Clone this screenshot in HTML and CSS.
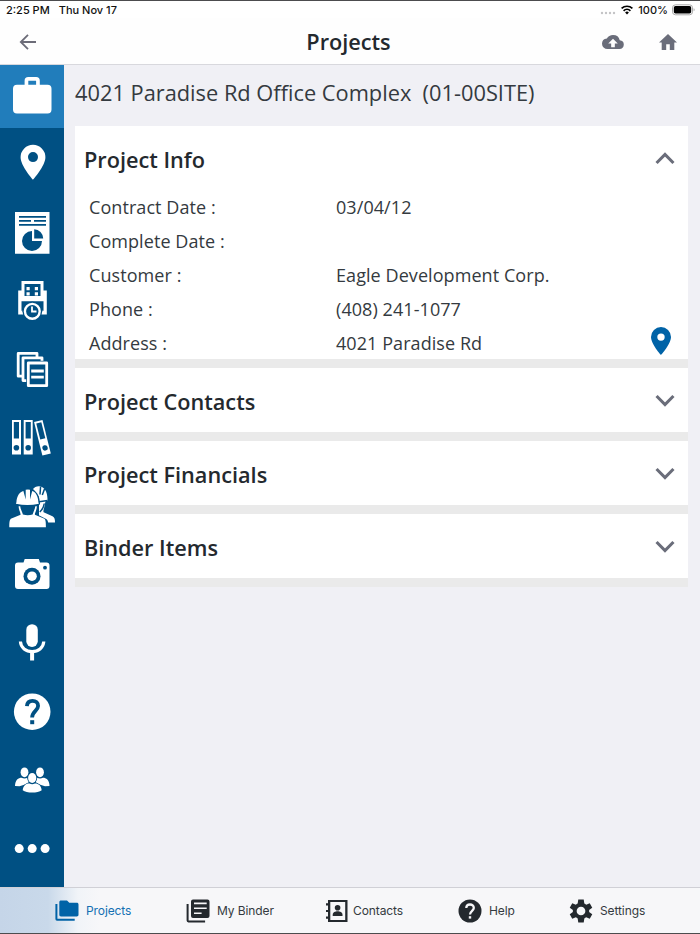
FILE: index.html
```html
<!DOCTYPE html>
<html lang="en">
<head>
    <meta charset="UTF-8">
    <meta name="viewport" content="width=device-width, initial-scale=1.0">
    <title>Projects</title>
    <link rel="stylesheet" href="styles.css">
</head>
<body>
    <div class="app">
        <div class="statusbar">
            <span class="time">2:25 PM</span>
            <span class="date">Thu Nov 17</span>
            <svg class="signal" width="16" height="12" viewBox="0 0 16 12" fill="#c4c4c6"><circle cx="2" cy="9" r="1.2"/><circle cx="6" cy="9" r="1.2"/><circle cx="10" cy="9" r="1.2"/><circle cx="14" cy="9" r="1.2"/></svg>
            <svg class="wifi" width="12" height="10" viewBox="0 0 12 10" fill="none" stroke="#000" stroke-width="1.7"><path d="M.6 3.4a7.8 7.8 0 0 1 10.8 0M2.6 5.8a5 5 0 0 1 6.8 0"/><path d="M6 9.5 4.1 7.5a2.8 2.8 0 0 1 3.8 0z" fill="#000" stroke="none"/></svg>
            <span class="percent">100%</span>
            <svg class="battery" width="23" height="12" viewBox="0 0 23 12"><rect x=".5" y=".8" width="20" height="10" rx="3" fill="#fff" stroke="#aaa"/><rect x="1.8" y="2.1" width="17.4" height="7.4" rx="1.7"/><path d="M21.6 4.2v3q1-.3 1-1.5t-1-1.5" fill="#aaa"/></svg>
        </div>

        <header class="header">
            <svg class="back" width="18" height="16" viewBox="0 0 18 16" fill="none" stroke="#6c6c78" stroke-width="1.8"><path d="M17 8H1.8M9 .8 1.8 8 9 15.2"/></svg>
            <h1>Projects</h1>
            <div class="actions">
                <svg width="22" height="14" viewBox="0 4 24 16" preserveAspectRatio="none" fill="#6a6d7a"><path d="M19.35 10.04A7.49 7.49 0 0 0 12 4C9.11 4 6.6 5.64 5.35 8.04A6 6 0 0 0 0 14a6 6 0 0 0 6 6h13a5 5 0 0 0 .35-9.96zM14 13.6V18h-4v-4.4H6.8L12 8.2l5.2 5.4z" fill-rule="evenodd"/></svg>
                <svg width="18" height="16" viewBox="2 3 20 17" preserveAspectRatio="none" fill="#6a6d7a"><path d="M10 20v-6h4v6h5v-8h3L12 3 2 12h3v8z"/></svg>
            </div>
        </header>

        <div class="main">
            <nav class="sidebar">
                <a class="side-item active">
                    <svg viewBox="0 0 64 63"><path fill-rule="evenodd" d="M16 19.7h8.6v-4a3.7 3.7 0 0 1 3.7-3.7h7.8a3.7 3.7 0 0 1 3.7 3.7v4h7.7a4 4 0 0 1 4 4v20.8a4 4 0 0 1-4 4H17a4 4 0 0 1-4-4V23.7a4 4 0 0 1 4-4zm12.3 0h7.8v-3.9h-7.8z"/></svg>
                </a>
                <a class="side-item">
                    <svg viewBox="0 0 64 63"><path fill-rule="evenodd" d="M33 11.8a12.4 12.4 0 0 0-12.4 12.4C20.6 33 33 46.7 33 46.7S45.4 33 45.4 24.2A12.4 12.4 0 0 0 33 11.8zm0 7.3a5 5 0 1 1 0 10 5 5 0 0 1 0-10z"/></svg>
                </a>
                <a class="side-item">
                    <svg viewBox="0 0 64 63"><path d="M15 10h34.5v41.8H15z"/><g class="cut"><path d="M19 14h27v1.7H19zM19 18h12v1.7H19zM34 18h12v1.7H34zM19 22h27v1.8H19z"/><path d="M32 29v10h10a10 10 0 1 1-10-10z"/><path d="M34.2 27.2a9.5 9.5 0 0 1 9 9.2h-9z"/></g></svg>
                </a>
                <a class="side-item">
                    <svg viewBox="0 0 64 63"><path d="M21.5 11h22v9.5h3.3v24H18.2v-24h3.3z"/><path class="cut" d="M24.5 14h16v12h-16zM21.5 31.2h22v9.5h-22z"/><path d="M26.5 17h3.2v3.2h-3.2zM34.8 17H38v3.2h-3.2zM26.5 22.3h3.2v3.2h-3.2zM34.8 22.3H38v3.2h-3.2z"/><circle cx="32.3" cy="41.3" r="9.9" class="cut"/><circle cx="32.3" cy="41.3" r="7.4" class="line"/><path class="line thin" d="M32 36.5v5h4.5"/></svg>
                </a>
                <a class="side-item">
                    <svg viewBox="0 0 64 63"><g class="paper"><path d="M18.2 14.4H37v22.8H18.2z"/><path d="M23 18.8h19v22.8H23z"/><path class="gap" d="M26.2 21.8h23v28h-23z"/><path d="M28.3 24h18.4v22.7H28.3z"/><path d="M31.2 32h12.6M31.2 38.2h12.6"/></g></svg>
                </a>
                <a class="side-item">
                    <svg viewBox="0 0 64 63"><path d="M12 13h9v34.5h-9z"/><path class="cut" d="M13.8 15H19v16.5h-5.2z"/><circle class="cut" cx="16.4" cy="40.8" r="2.8"/><path d="M23.7 13h9v34.5h-9z"/><path class="cut" d="M25.6 15h5.2v16.5h-5.2z"/><circle class="cut" cx="28.2" cy="40.8" r="2.8"/><g transform="rotate(-14 42.3 30.4)"><path d="M38 13.5h8.7V48H38z"/><path class="cut" d="M39.8 15.5H45V32h-5.2z"/><circle class="cut" cx="42.4" cy="41.3" r="2.7"/></g></svg>
                </a>
                <a class="side-item">
                    <svg viewBox="0 0 64 63"><path d="M33 13c1.2-1.8 3.5-2.9 6-2.8 5.2.3 9 5.5 8.4 14.5l-2 .6c-.8 7-2.6 9-1.8 10.9l8.9 4.1c2 .9 2.5 3 2.5 6.2H39V21z"/><path class="cut-line" d="m40.6 10.5-.6 8M44.6 12.8 42.3 19M37.5 26l10-1.6M44.3 27.5c-.8 5-2.3 6.5-4.5 8.5"/><path class="cut" d="M14.8 25.2C15 16.4 21.3 11.8 27 12c7 0 12 5.3 12.8 13.2l.3 3-2 1.3c-.2 5-1.8 7-2.2 8.2l10.3 5.3c1.8 1 2.3 4 2.3 8.2H8V51c0-5.8 1-7.5 3-8.4l8-3.8-2-9.3-3-1.5z"/><path d="M16.4 26.2c.3-6.3 3.3-10.2 7-11.2l2.3 8.6V13.8q2.3-.6 4.3 0v9.8l2.2-8.6c3.5 1 5.8 5 6.2 11.2l.5 1.5q-11.3 2.5-23 0z"/><path d="M18.6 30.2h1.6c.3 3 2.2 6 2.7 8.3q4.9 1.5 9.7 0c.6-2 2.3-5.3 2.7-8.3h1.6c-.5 5.3-2 6-2 8.6l9 3.7c1.7.8 2 2.8 2 8.7H9.3c0-5.8.4-7.9 2.1-8.7l9.2-3.7c-.2-3-1.8-4.3-2-8.6z"/></svg>
                </a>
                <a class="side-item">
                    <svg viewBox="0 0 64 63"><path d="M18 18.4h5.5l1.2-3.3h14.1l1.2 3.3h6.5a3 3 0 0 1 3 3V42a3 3 0 0 1-3 3H18a3 3 0 0 1-3-3V21.4a3 3 0 0 1 3-3z"/><circle class="cut" cx="32" cy="32.2" r="8.5"/><circle cx="32" cy="32.2" r="4.8"/><circle class="cut" cx="45" cy="23.7" r="1.9"/></svg>
                </a>
                <a class="side-item">
                    <svg viewBox="0 0 64 63"><rect x="26.3" y="12.2" width="11.5" height="22.8" rx="5.7"/><path class="line thick" d="M20.4 29.5c.4 6.3 5.6 10.1 11.7 10.1s11.3-3.8 11.7-10.1"/><path d="M30.1 40h4v8.6h-4z"/></svg>
                </a>
                <a class="side-item">
                    <svg viewBox="0 0 64 63"><circle cx="32.2" cy="30.7" r="18.3"/><path class="cut-line bold" d="M26.9 25.2c.2-3.5 2.3-5.4 5.6-5.4 3.4 0 5.6 2 5.6 5.2 0 4.6-6 5.3-6 11.4"/><path class="cut" d="M30.2 39.2h4v4h-4z"/></svg>
                </a>
                <a class="side-item">
                    <svg viewBox="0 0 64 63"><ellipse cx="24.5" cy="23.3" rx="3.9" ry="4.9"/><ellipse cx="40" cy="23.3" rx="3.9" ry="4.9"/><path d="M15 37c0-6 3.5-8.2 6.5-8.2q3 1.2 6 0L29 33l-4 2.5-5.5 1.7zM49.5 37c0-6-3.5-8.2-6.5-8.2q-3 1.2-6 0L35.5 33l4 2.5 5.5 1.7z"/><ellipse class="cut" cx="32.2" cy="28.8" rx="5" ry="5.9"/><path class="cut" d="M21.7 42c.4-6 4.4-8.2 8.3-8h4.4c3.9-.2 7.9 2 8.3 8z"/><ellipse cx="32.2" cy="29" rx="4.1" ry="5"/><path d="M22.7 41.2c.6-5 3.9-6.8 6.8-6.6q2.7 1.2 5.4 0c3.2-.2 6.3 1.8 6.8 6.6-4 3.2-15 3.2-19 0z"/></svg>
                </a>
                <a class="side-item">
                    <svg viewBox="0 0 64 63"><circle cx="19.2" cy="30.6" r="4.5"/><circle cx="32.2" cy="30.6" r="4.5"/><circle cx="45.1" cy="30.6" r="4.5"/></svg>
                </a>
            </nav>

            <section class="content">
                <h2 class="project-name">4021 Paradise Rd Office Complex&nbsp; (01-00SITE)</h2>

                <div class="card info">
                    <div class="card-header">
                        <h3>Project Info</h3>
                        <svg class="chevron" viewBox="0 0 18 12"><path d="m1.2 10.2 7.8-8 7.8 8"/></svg>
                    </div>
                    <div class="row"><span class="label">Contract Date :</span><span class="value">03/04/12</span></div>
                    <div class="row"><span class="label">Complete Date :</span><span class="value"></span></div>
                    <div class="row"><span class="label">Customer :</span><span class="value">Eagle Development Corp.</span></div>
                    <div class="row"><span class="label">Phone :</span><span class="value">(408) 241-1077</span></div>
                    <div class="row">
                        <span class="label">Address :</span><span class="value">4021 Paradise Rd</span>
                        <svg class="pin" width="20" height="28" viewBox="0 0 20 28"><path fill="#0063a7" fill-rule="evenodd" d="M10 0A10 10 0 0 0 0 10c0 7 10 18 10 18s10-11 10-18A10 10 0 0 0 10 0zm0 6.4a3.7 3.7 0 1 1 0 7.4 3.7 3.7 0 0 1 0-7.4z"/></svg>
                    </div>
                </div>
                <div class="card">
                    <div class="card-header">
                        <h3>Project Contacts</h3>
                        <svg class="chevron" viewBox="0 0 18 12"><path d="m1.2 1.8 7.8 8 7.8-8"/></svg>
                    </div>
                </div>
                <div class="card">
                    <div class="card-header">
                        <h3>Project Financials</h3>
                        <svg class="chevron" viewBox="0 0 18 12"><path d="m1.2 1.8 7.8 8 7.8-8"/></svg>
                    </div>
                </div>
                <div class="card">
                    <div class="card-header">
                        <h3>Binder Items</h3>
                        <svg class="chevron" viewBox="0 0 18 12"><path d="m1.2 1.8 7.8 8 7.8-8"/></svg>
                    </div>
                </div>
            </section>
        </div>

        <footer class="tabbar">
            <a class="tab tab-projects selected">
                <svg width="24" height="24" viewBox="0 0 24 24"><path d="M6 1.5h6l2.3 2.3h7.5c1 0 1.7.7 1.7 1.6v10.4c0 1-.7 1.7-1.7 1.7H6c-1 0-1.7-.7-1.7-1.7V3.2c0-1 .7-1.7 1.7-1.7z"/><path d="M.4 5h2v14.7h17.3v2H2q-1.6 0-1.6-1.6z"/></svg>
                <span>Projects</span>
            </a>
            <a class="tab tab-binder">
                <svg width="24" height="24" viewBox="0 0 24 24"><path fill-rule="evenodd" d="M7 .6h14.5a2 2 0 0 1 2 2V17a2 2 0 0 1-2 2H7a2 2 0 0 1-2-2V2.6a2 2 0 0 1 2-2zM8 5.2h12.7V3.6H8zm0 4.9h12.7V8.5H8zm0 5h7.6v-1.6H8z"/><path d="M.6 5h2v16.4h16.5v2H2.4q-1.8 0-1.8-1.8z"/></svg>
                <span>My Binder</span>
            </a>
            <a class="tab tab-contacts">
                <svg width="24" height="24" viewBox="0 0 24 24"><path fill-rule="evenodd" d="M3 1h19.5v22H3v-3.2H1v-2.2h2v-4.5H1v-2.2h2V6.4H1V4.2h2zm2.3 2.1v17.8h14.9V3.1z"/><circle cx="12.6" cy="8.8" r="2.8"/><path d="M7.7 17v-1.3c0-2.3 2.6-3.4 4.9-3.4s4.9 1.1 4.9 3.4V17z"/></svg>
                <span>Contacts</span>
            </a>
            <a class="tab tab-help">
                <svg width="24" height="24" viewBox="0 0 24 24"><circle cx="12" cy="12" r="11.5"/><path fill="none" stroke="#f7f7f9" stroke-width="2.3" d="M8.3 9.1c0-2.2 1.6-3.6 3.7-3.6s3.8 1.4 3.8 3.5c0 2.7-3.8 3-3.8 6.6"/><path fill="#f7f7f9" d="M10.8 17.2h2.4v2.4h-2.4z"/></svg>
                <span>Help</span>
            </a>
            <a class="tab tab-settings">
                <svg width="24" height="24" viewBox="1 1 22 22"><path d="M19.43 12.98c.04-.32.07-.64.07-.98s-.03-.66-.07-.98l2.9-2.1-2.3-4.1-3.3 1.35a7.5 7.5 0 0 0-1.69-.98L14.5 1.5h-5l-.54 3.69c-.61.25-1.17.59-1.69.98L3.97 4.82l-2.3 4.1 2.9 2.1a8 8 0 0 0 0 1.96l-2.9 2.1 2.3 4.1 3.3-1.35c.52.4 1.08.73 1.69.98l.54 3.69h5l.54-3.69a7.5 7.5 0 0 0 1.69-.98l3.3 1.35 2.3-4.1zM12 16a4 4 0 1 1 0-8 4 4 0 0 1 0 8z"/></svg>
                <span>Settings</span>
            </a>
        </footer>
    </div>
</body>
</html>
```
FILE: styles.css
```css
* {
    box-sizing: border-box;
}
body {
    margin: 0;
    font-family: "Open Sans", "Noto Sans", sans-serif;
    color: #343a40;
    background-color: #f0f0f5;
}
svg {
    display: block;
    flex: none;
}
h1, h2, h3 {
    margin: 0;
    color: #24292e;
}
.app {
    display: flex;
    flex-direction: column;
    width: 700px;
    height: 934px;
    border-top: 1px solid #4c4c4e;
    border-bottom: 1px solid #4c4c4e;
}

/* status bar */
.statusbar {
    display: flex;
    align-items: center;
    height: 17px;
    padding: 0 5px 0 6px;
    background-color: #fff;
    font-family: Inter, sans-serif;
    font-size: 11px;
    font-weight: 500;
    color: #111;
}
.date {
    margin-left: 9px;
}
.signal {
    margin-left: auto;
}
.wifi {
    margin-left: 5px;
}
.percent {
    margin-left: 5px;
}
.battery {
    margin-left: 4px;
}

/* title bar */
.header {
    display: grid;
    grid-template-columns: 1fr auto 1fr;
    align-items: center;
    height: 47px;
    padding: 2px 22px 0 19px;
    background-color: #fefefe;
    border-bottom: 1px solid #d8d8dd;
}
.header h1 {
    font-size: 21.7px;
    font-weight: 600;
    line-height: 30px;
}
.actions {
    display: flex;
    align-items: center;
    justify-content: flex-end;
    gap: 35px;
    margin-right: 1px;
}

.main {
    display: flex;
    flex: 1;
    min-height: 0;
}

/* left icon menu */
.sidebar {
    display: flex;
    flex-direction: column;
    gap: 5.43px;
    width: 64px;
    background-color: #005083;
}
.side-item {
    flex: none;
    height: 63px;
}
.side-item.active {
    background-color: #217dbb;
}
.side-item svg {
    width: 64px;
    height: 63px;
    fill: #fff;
}
.side-item .cut {
    fill: #005083;
}
.side-item .line {
    fill: none;
    stroke: #fff;
    stroke-width: 2.4;
}
.side-item .line.thin {
    stroke-width: 1.8;
}
.side-item .line.thick {
    stroke-width: 3.2;
}
.side-item .cut-line {
    fill: none;
    stroke: #005083;
    stroke-width: 1.5;
}
.side-item .cut-line.bold {
    stroke-width: 3.8;
}
.paper {
    fill: #005083;
    stroke: #fff;
    stroke-width: 2.8;
    stroke-linejoin: round;
}
.paper .gap {
    stroke: none;
}

/* project details */
.content {
    flex: 1;
    padding: 12px 12px 0 11px;
}
.project-name {
    height: 49px;
    font-size: 21.8px;
    font-weight: 400;
    line-height: 32px;
    white-space: nowrap;
    color: #343a40;
}
.card {
    height: 73px;
    background-color: #fff;
    border-bottom: 9px solid #eaeaea;
}
.card.info {
    height: 242px;
}
.card-header {
    display: flex;
    align-items: center;
    justify-content: space-between;
    height: 64px;
    padding: 4px 13px 0 9px;
}
.card-header h3 {
    font-size: 21.7px;
    font-weight: 600;
    line-height: 30px;
}
.chevron {
    width: 20px;
    height: 13px;
    margin-top: -4px;
    fill: none;
    stroke: #6a6d7a;
    stroke-width: 2.8;
}
.row {
    display: flex;
    align-items: center;
    height: 34px;
    padding: 0 17px 1px 14px;
    font-size: 18px;
    letter-spacing: 0.07px;
}
.label {
    width: 247px;
}
.pin {
    margin-left: auto;
    margin-top: -4px;
}

/* bottom tabs */
.tabbar {
    display: flex;
    height: 46px;
    border-top: 1px solid #d0d0d6;
    background: linear-gradient(90deg, #c5d5e8 0, #c9d9ea 48px, #f1f4f8 78px, #f7f7f9 100px);
    font-family: Inter, sans-serif;
    font-size: 12px;
    letter-spacing: -0.1px;
    color: #343a40;
}
.tab {
    display: flex;
    align-items: center;
    gap: 7px;
}
.tab svg {
    fill: #24292e;
}
.tab-projects {
    width: 131px;
    margin-left: 55px;
}
.tab-binder {
    width: 139px;
}
.tab-contacts {
    width: 133px;
    gap: 4px;
}
.tab-help {
    width: 111px;
}
.tab.selected {
    color: #1470b3;
}
.tab.selected svg {
    fill: #0063a7;
}
```
